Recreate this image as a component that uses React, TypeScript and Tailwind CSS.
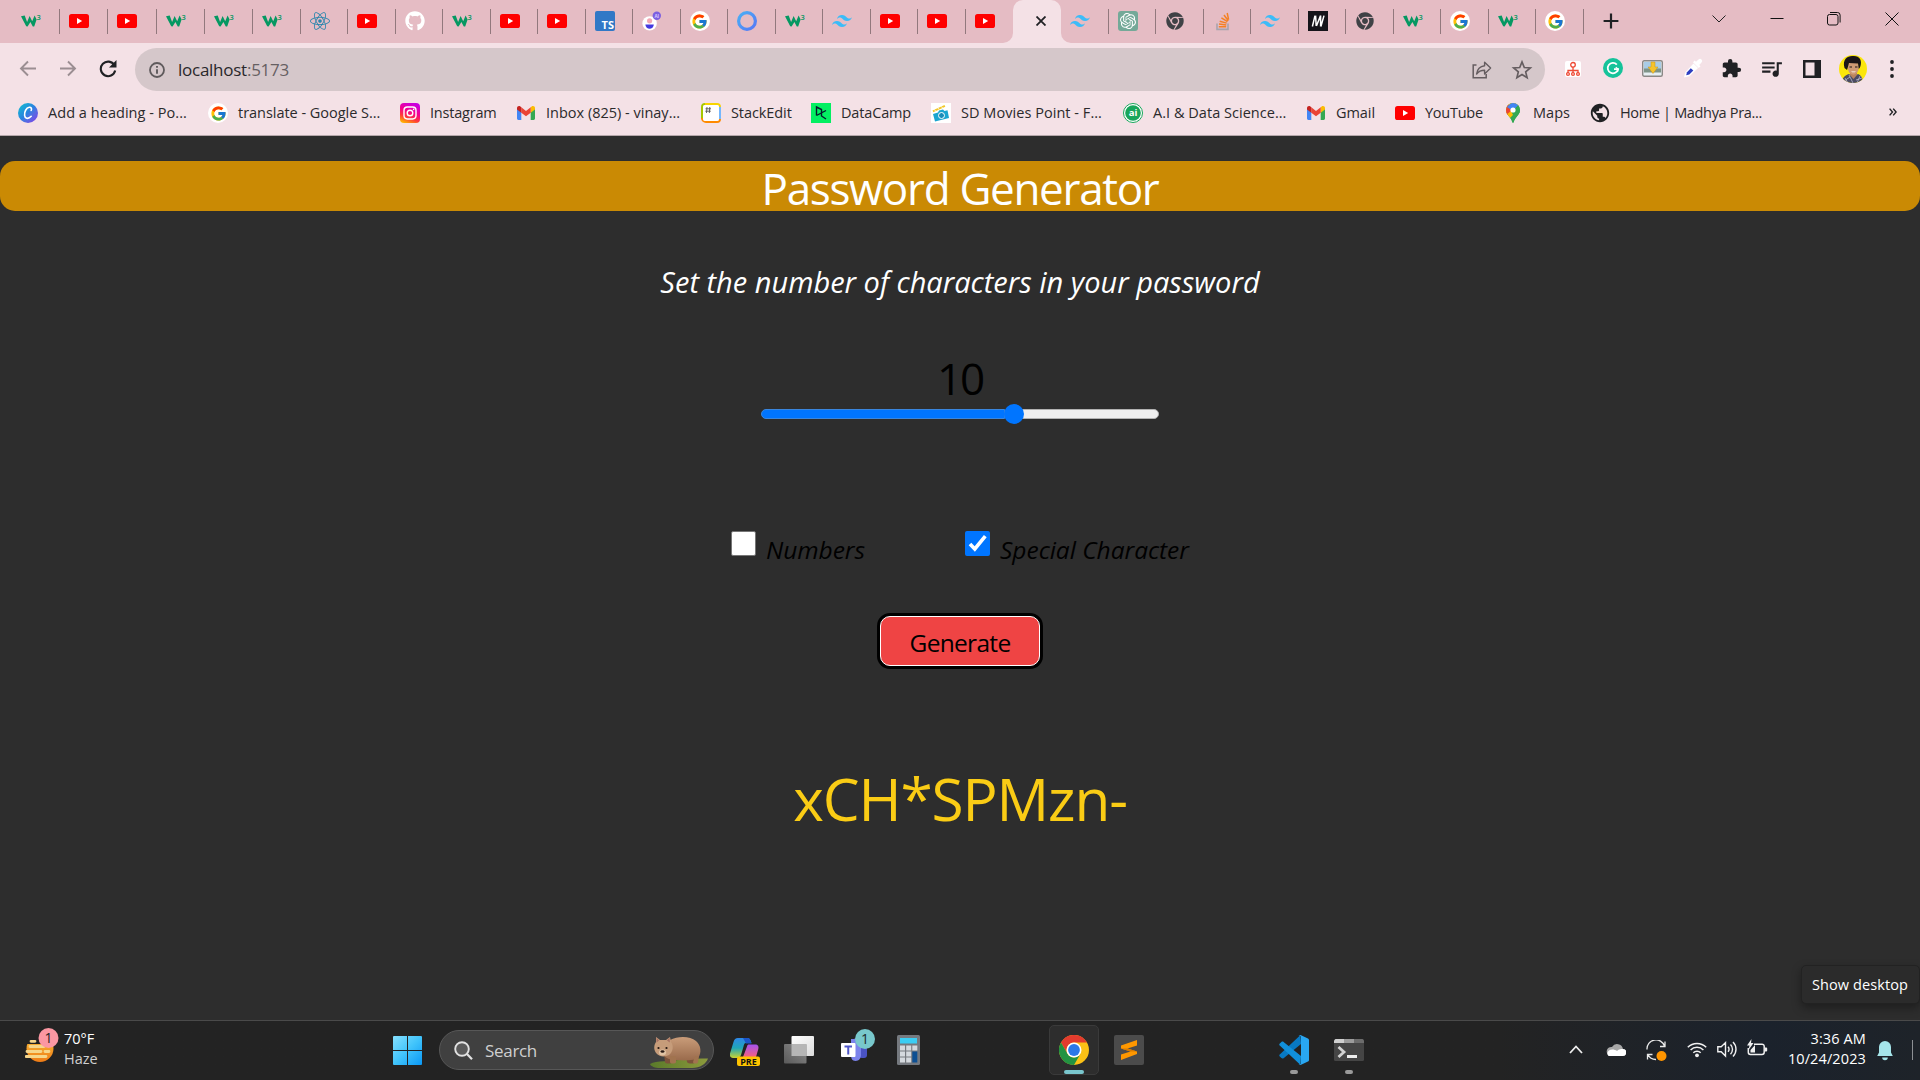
import React, { useState } from "react";
import { FcGoogle } from "react-icons/fc";
import { FaChrome, FaGithub, FaReact } from "react-icons/fa";
import { SiOpenai, SiTailwindcss } from "react-icons/si";
import { MdExtension, MdQueueMusic, MdPublic } from "react-icons/md";

/* ---------- favicons (20 x 20) ---------- */

function W3() {
  return (
    <svg viewBox="0 0 20 20" className="size-5">
      <path d="M0 5.3 3.7 4.6 6.1 11 8.6 5 11.2 10.2 13.6 4.6 15.6 8.4 13.2 15.6 11.8 15.6 9.4 11 6.6 15.6 5.2 15.2Z" fill="#059862" />
      <text x="15.6" y="8.6" fontSize="7.5" fontWeight="600" fontFamily="Open Sans, sans-serif" fill="#059862">3</text>
    </svg>
  );
}

function YouTube() {
  return (
    <svg viewBox="0 0 20 20" className="size-5">
      <rect y="3" width="20" height="14" rx="2.6" fill="#f00" />
      <path d="M8 7v6l5.2-3z" fill="#fff" />
    </svg>
  );
}

function Google() {
  return (
    <span className="flex size-5 items-center justify-center rounded-full bg-white">
      <FcGoogle className="size-[17px]" />
    </span>
  );
}

function GitHub() {
  return <FaGithub className="size-5 text-white" />;
}

function ReactLogo() {
  return <FaReact className="size-5 text-[#2c86ad]" />;
}

function TypeScript() {
  return (
    <span className="flex size-5 items-end justify-end rounded-[2px] bg-[#3178c6] pr-px text-[11px] leading-[13px] font-bold text-white">
      TS
    </span>
  );
}

function AiPerson() {
  return (
    <svg viewBox="0 0 20 20" className="size-5">
      <circle cx="7.6" cy="12.4" r="7.2" fill="#fff" />
      <circle cx="7.6" cy="9.8" r="2.6" fill="#f3a6b4" />
      <path d="M3.4 13.6h8.4a4.2 4.2 0 0 1-8.4 0z" fill="#4338e0" />
      <circle cx="14.8" cy="4.8" r="4.2" fill="#7c5fe0" />
      <text x="14.8" y="6.6" fontSize="4.6" fontWeight="700" textAnchor="middle" fontFamily="Open Sans, sans-serif" fill="#d7c9ff">AI</text>
    </svg>
  );
}

function BlueRing() {
  return (
    <svg viewBox="0 0 20 20" className="size-5">
      <defs>
        <linearGradient id="ring" x1="0" y1="0" x2="1" y2="1">
          <stop offset="0" stopColor="#4ab0f5" />
          <stop offset="1" stopColor="#5577f5" />
        </linearGradient>
      </defs>
      <circle cx="10" cy="10" r="8.4" fill="none" stroke="url(#ring)" strokeWidth="3.2" />
    </svg>
  );
}

function Tailwind() {
  return <SiTailwindcss className="size-5 text-[#3bbcf8]" />;
}

function OpenAi() {
  return (
    <span className="flex size-5 items-center justify-center rounded-[3px] bg-[#74a998]">
      <SiOpenai className="size-4 text-white" />
    </span>
  );
}

function ChromeGrey() {
  return <FaChrome className="size-[18px] text-[#3f4246]" />;
}

function StackOverflow() {
  return (
    <svg viewBox="0 0 20 20" className="size-5">
      <path d="M4 12.4v6h11v-6" fill="none" stroke="#a9a4ad" strokeWidth="1.6" />
      <path d="M5.8 15.8h7.4M6 13.1l7.3.8M6.7 10.2l7 1.9M8.4 6.9l6.1 3.7M11 4l4.3 5.7M14.2 2l1.4 6.6" stroke="#f48024" strokeWidth="1.5" fill="none" />
    </svg>
  );
}

function MLogo() {
  return (
    <svg viewBox="0 0 20 20" className="size-5">
      <rect width="20" height="20" fill="#15141a" />
      <path d="M4.4 15.5 7 4.6M7.6 4.6 8.2 15M8.4 15 12.6 4.6M12.6 4.6v10.9M12.9 15.5 16 4.6" stroke="#fff" strokeWidth="1.5" fill="none" />
    </svg>
  );
}

/* ---------- tab strip ---------- */

const leftTabs = [
  W3, YouTube, YouTube, W3, W3, W3, ReactLogo, YouTube, GitHub, W3, YouTube, YouTube, TypeScript,
  AiPerson, Google, BlueRing, W3, Tailwind, YouTube, YouTube, YouTube,
];
const rightTabs = [Tailwind, OpenAi, ChromeGrey, StackOverflow, Tailwind, MLogo, ChromeGrey, W3, Google, W3, Google];

function Tab({ icon: Icon, divider, wide = false }: { icon: React.ComponentType; divider: boolean; wide?: boolean }) {
  return (
    <div className={`${wide ? "w-[48.4px]" : "w-[47.5px]"} relative flex h-[43px] shrink-0 items-center pb-px pl-[9px]`}>
      <span className="flex size-5 items-center justify-center">
        <Icon />
      </span>
      {divider && <span className="absolute top-[9px] right-0 h-[25px] w-px bg-[#92787d]" />}
    </div>
  );
}

function TabStrip() {
  return (
    <div className="flex h-[43px] bg-[#e5bcc4] pl-[11.500px]">
      {leftTabs.map((icon, i) => (
        <Tab key={i} icon={icon} divider={i < leftTabs.length - 1} wide={i < 5} />
      ))}
      <div className="relative flex h-[43px] w-[48px] shrink-0 items-center justify-end rounded-t-[10px] bg-[#f4e1e6] pr-[15px] pb-px">
        <svg viewBox="0 0 10 10" className="absolute bottom-0 -left-[10px] size-[10px]">
          <path d="M10 0v10H0A10 10 0 0 0 10 0" fill="#f4e1e6" />
        </svg>
        <svg viewBox="0 0 10 10" className="absolute -right-[10px] bottom-0 size-[10px]">
          <path d="M0 0v10h10A10 10 0 0 1 0 0" fill="#f4e1e6" />
        </svg>
        <svg viewBox="0 0 10 10" className="size-[10px]">
          <path d="M.5.5l9 9M9.5.5l-9 9" stroke="#202124" strokeWidth="1.8" />
        </svg>
      </div>
      {rightTabs.map((icon, i) => (
        <Tab key={i} icon={icon} divider />
      ))}
      <svg viewBox="0 0 16 16" className="mt-[13px] ml-[19px] size-4">
        <path d="M8 .6v14.8M.6 8h14.8" stroke="#202124" strokeWidth="2.2" />
      </svg>
      <div className="ml-auto flex shrink-0 pt-3">
        <svg viewBox="0 0 14 14" className="mr-11 size-[14px]">
          <path d="M.5 3.5 7 10l6.500-6.500" stroke="#222" fill="none" />
        </svg>
        <svg viewBox="0 0 14 14" className="mr-[43px] size-[14px]">
          <path d="M.5 6.500h13" stroke="#111" fill="none" />
        </svg>
        <svg viewBox="0 0 14 14" className="mr-[44px] size-[14px]">
          <rect x=".5" y="2.500" width="10.500" height="10.500" rx="2" stroke="#111" fill="none" />
          <path d="M3 .5h7.500a2.600 2.600 0 0 1 2.600 2.600V10.500" stroke="#111" fill="none" />
        </svg>
        <svg viewBox="0 0 14 14" className="mr-[21px] size-[14px]">
          <path d="M.5.5l13 13M13.500.5l-13 13" stroke="#111" fill="none" />
        </svg>
      </div>
    </div>
  );
}

/* ---------- toolbar ---------- */

function Toolbar() {
  return (
    <div className="flex h-[53px] items-start pl-[19px]">
      <svg viewBox="0 0 18 18" className="mt-[17px] size-[18px]">
        <path d="M17 8.500H2M9 1.500l-7 7 7 7" stroke="#9b8e92" strokeWidth="1.900" fill="none" />
      </svg>
      <svg viewBox="0 0 18 18" className="mt-[17px] ml-[22px] size-[18px]">
        <path d="M1 8.500h15M9 1.500l7 7-7 7" stroke="#9b8e92" strokeWidth="1.900" fill="none" />
      </svg>
      <svg viewBox="0 0 18 18" className="mt-[17px] ml-[22px] size-[18px]">
        <path d="M15.400 5.200A7.300 7.300 0 1 0 16.200 10.600" stroke="#202124" strokeWidth="2.100" fill="none" />
        <path d="M17.500 0v7.500H10z" fill="#202124" />
      </svg>

      <div className="mt-[5px] ml-[18px] flex h-[43px] w-[1410px] items-center rounded-full bg-[#d5c7ca] pl-[14px]">
        <svg viewBox="0 0 16 16" className="size-4">
          <circle cx="8" cy="8" r="7" stroke="#5f5a5c" strokeWidth="1.800" fill="none" />
          <path d="M8 7.200v4.600M8 3.900v1.800" stroke="#5f5a5c" strokeWidth="1.900" />
        </svg>
        <span className="ml-[13px] text-[17px] tracking-[-0.015em] text-[#665f62]">
          <span className="text-[#29282a]">localhost</span>:5173
        </span>
        <svg viewBox="0 0 20 18" className="ml-auto h-[18px] w-5">
          <path d="M4.500 4H1.200v12.800h13V13" stroke="#655d60" strokeWidth="1.500" fill="none" />
          <path d="M12.600 1.200v3.600C7.600 5.500 5.200 8.500 4.600 13c2-2.700 4.400-3.700 8-3.700V13l6-5.900z" stroke="#655d60" strokeWidth="1.400" fill="none" strokeLinejoin="round" />
        </svg>
        <svg viewBox="0 0 24 24" className="mr-[12px] ml-[19px] size-[22px]">
          <path d="m12 3.200 2.500 6.100 6.600.5-5.100 4.200 1.600 6.400L12 17l-5.600 3.400L8 14 2.900 9.800l6.600-.5z" stroke="#655d60" strokeWidth="1.800" fill="none" />
        </svg>
      </div>

      <svg viewBox="0 0 16 16" className="mt-[18px] ml-5 size-4">
        <rect width="16" height="16" rx="2" fill="#fff" />
        <g stroke="#ee4a35" fill="none" strokeWidth="1.300">
          <circle cx="8" cy="3.800" r="2.300" />
          <path d="M8 6v6M3 12V9.500h10V12" />
          <circle cx="3" cy="13" r="1.400" />
          <circle cx="8" cy="13" r="1.400" />
          <circle cx="13" cy="13" r="1.400" />
        </g>
      </svg>
      <svg viewBox="0 0 20 20" className="mt-[15px] ml-[22px] size-5">
        <circle cx="10" cy="10" r="10" fill="#15c39a" />
        <path d="M13.800 6.600A5.200 5.200 0 1 0 15 11.200h-4" stroke="#fff" strokeWidth="1.800" fill="none" />
        <path d="m12.800 9.300 2.300 1.900-.6 2.600" stroke="#fff" strokeWidth="1.300" fill="none" />
      </svg>
      <svg viewBox="0 0 21 17" className="mt-[17px] ml-[19px] h-[17px] w-[21px]">
        <rect x=".7" y=".7" width="19.600" height="15.600" rx="1.500" fill="#e6eef2" stroke="#8b8886" strokeWidth="1.400" />
        <rect x="2" y="2" width="17" height="7" fill="#a9cce6" />
        <rect x="2" y="8.500" width="17" height="4" fill="#7f9488" />
        <path d="M9 2h4v5h3l-5 6.500L6 7h3z" fill="#f6c32c" stroke="#c89416" strokeWidth=".5" />
      </svg>
      <svg viewBox="0 0 20 20" className="mt-[15px] ml-5 size-5">
        <path d="m2 18.500 1-4 7.500-8 3.500 3.500L6 17.500z" fill="#fff" stroke="#fff" strokeWidth="1.500" />
        <path d="m3.200 17.200.8-3 3.800-4 2.500 2.400-4 4z" fill="#2c3fc0" />
        <path d="m10 4.200 5.800 5.800 1.700-1.700-1.300-1.300 2.300-2.500a2 2 0 0 0-3-3l-2.500 2.300-1.300-1.300z" fill="#fff" />
      </svg>
      <MdExtension className="mt-[15px] ml-[18px] size-[21px] text-[#202124]" />
      <MdQueueMusic className="mt-[13px] ml-[17px] size-[25px] text-[#202124]" />
      <svg viewBox="0 0 18 18" className="mt-[17px] ml-[19px] size-[18px]">
        <path d="M0 0h18v18H0zM2.500 2.500v13h9v-13z" fill="#202124" fillRule="evenodd" />
      </svg>
      <svg viewBox="0 0 28 28" className="mt-[12px] ml-[18px] size-7">
        <defs>
          <clipPath id="avatar"><circle cx="14" cy="14" r="14" /></clipPath>
        </defs>
        <g clipPath="url(#avatar)">
          <rect width="28" height="28" fill="#fbe60a" />
          <path d="M3 28c0-5 3-8 7-9l4 3 5-3c3 1 5 4 5 9z" fill="#4b4b63" />
          <path d="M6 23l3 5M10 20l4 8M21 21l-3 7M5 26l6-4M17 25l6-2" stroke="#b9b7c8" strokeWidth=".8" />
          <path d="M11 16h7v4l-3.500 4L11 20z" fill="#b9835e" />
          <ellipse cx="14.300" cy="12.500" rx="5.600" ry="7.200" fill="#cf9a74" />
          <path d="M5.500 13C3 4 9 .5 14 1c6-.5 10 4 7 11.500L19.800 14 19 8.500 10 8l-1.500 5.500L8 15z" fill="#1b1517" />
          <path d="M10.500 12h2.500M16 12h2.500" stroke="#1b1517" />
          <path d="M12 16.400c1.500 1.200 3.500 1.200 5 0z" fill="#fff" />
        </g>
      </svg>
      <svg viewBox="0 0 4 18" className="mt-[17px] ml-[23px] h-[18px] w-1">
        <circle cx="2" cy="2" r="1.900" fill="#202124" />
        <circle cx="2" cy="9" r="1.900" fill="#202124" />
        <circle cx="2" cy="16" r="1.900" fill="#202124" />
      </svg>
    </div>
  );
}

/* ---------- bookmarks ---------- */

function Canva() {
  return (
    <span className="flex size-5 items-center justify-center rounded-full bg-linear-to-br from-[#11c3cc] via-[#2a7fe0] to-[#7d2ae8]">
      <svg viewBox="0 0 20 20" className="size-5">
        <path d="M13.200 7.500c1-2-.3-3.600-2-3.200-3 .6-5 4.600-4.600 8 .3 3 3.200 4.600 6.600 1" stroke="#fff" strokeWidth="1.600" fill="none" strokeLinecap="round" />
      </svg>
    </span>
  );
}

function Instagram() {
  return (
    <svg viewBox="0 0 20 20" className="size-5">
      <defs>
        <linearGradient id="insta" x1=".2" y1="1" x2=".6" y2="0">
          <stop offset="0" stopColor="#ffb800" />
          <stop offset=".3" stopColor="#ff3a3a" />
          <stop offset=".6" stopColor="#f5008e" />
          <stop offset="1" stopColor="#c800e0" />
        </linearGradient>
      </defs>
      <rect width="20" height="20" rx="4" fill="url(#insta)" />
      <rect x="4" y="4" width="12" height="12" rx="3.400" stroke="#fff" strokeWidth="1.400" fill="none" />
      <circle cx="10" cy="10" r="2.800" stroke="#fff" strokeWidth="1.400" fill="none" />
      <circle cx="13.600" cy="6.400" r=".8" fill="#fff" />
    </svg>
  );
}

function Gmail() {
  return (
    <svg viewBox="0 0 20 20" className="size-5">
      <path d="M1 5v10.500c0 .8.600 1.400 1.400 1.400h2.900V9z" fill="#4285f4" />
      <path d="M19 5v10.500c0 .8-.6 1.400-1.400 1.400h-2.900V9z" fill="#34a853" />
      <path d="M14.700 4.500V9.700L19 6.500V5c0-1.800-2-2.600-3.400-1.500z" fill="#fbbc04" />
      <path d="M5.300 9.700V4.300L10 7.900l4.700-3.600v5.400L10 13.200z" fill="#ea4335" />
      <path d="M1 5v1.500l4.300 3.200V4.300l-.9-.8C3 2.400 1 3.200 1 5z" fill="#c5221f" />
    </svg>
  );
}

function StackEdit() {
  return (
    <svg viewBox="0 0 20 20" className="size-5">
      <path d="M4 1h12a3 3 0 0 1 3 3" stroke="#f7d400" strokeWidth="2" fill="none" />
      <path d="M4 1a3 3 0 0 0-3 3v12" stroke="#a5c700" strokeWidth="2" fill="none" />
      <path d="M1 15a4 4 0 0 0 4 4h11a3 3 0 0 0 3-3" stroke="#ff8a00" strokeWidth="2" fill="none" />
      <path d="M19 4v12" stroke="#75b7fd" strokeWidth="2" />
      <rect x="2" y="2" width="16" height="16" rx="2" fill="#fff" />
      <path d="M6 4 5.500 10M8.800 4l-.5 6M4.500 5.800H10M4.300 8.200h5.500" stroke="#555" strokeWidth=".9" />
    </svg>
  );
}

function DataCamp() {
  return (
    <svg viewBox="0 0 20 20" className="size-5">
      <rect width="20" height="20" fill="#03ef62" />
      <path d="M5.500 12.500V4l5 2.500v6.500l4.500 3M5.500 12.500 15 7.500" stroke="#05192d" strokeWidth="1.400" fill="none" />
    </svg>
  );
}

function Movies() {
  return (
    <svg viewBox="0 0 20 20" className="size-5">
      <rect width="20" height="20" fill="#fff" />
      <path d="m1.500 7.500 12-5.500.8 1.800-12 5.500z" fill="#f2c72b" />
      <path d="m3.500 6.500 1 1.500M7 5l1 1.500M10.500 3.500l1 1.500" stroke="#fff" strokeWidth=".8" />
      <path d="m2 11 5-1.500 1-2 4-1 1.500 1.500 3-.8 1.500 7.800L4 18.500z" fill="#1aa5d0" />
      <circle cx="10.500" cy="12.500" r="3" fill="#1b8cb8" stroke="#fff" strokeWidth="1" />
    </svg>
  );
}

function AiBadge() {
  return (
    <svg viewBox="0 0 20 20" className="size-5">
      <circle cx="10" cy="10" r="9.500" fill="#fff" stroke="#17a65b" />
      <circle cx="10" cy="10" r="7.800" fill="#17a65b" />
      <text x="10" y="13.300" textAnchor="middle" fontSize="9.500" fontWeight="700" fontFamily="Open Sans, sans-serif" fill="#fff">ai</text>
    </svg>
  );
}

function MapsPin() {
  return (
    <svg viewBox="0 0 20 20" className="size-5">
      <defs>
        <clipPath id="pin"><path d="M10 0a7 7 0 0 1 7 7c0 3.200-1.800 4.800-3.600 7.200C12 16 11.200 17.600 10.800 19.200c-.3 1-1.300 1-1.600 0C8.800 17.600 8 16 6.600 14.200 4.800 11.800 3 10.200 3 7a7 7 0 0 1 7-7z" /></clipPath>
      </defs>
      <g clipPath="url(#pin)">
        <rect width="20" height="20" fill="#34a853" />
        <path d="M0 15 18 0H0z" fill="#fbbc04" />
        <path d="M0 9.500 5 1l5 6-6 7z" fill="#ea4335" />
        <path d="M4 4 9-1l9 1-8 8z" fill="#4285f4" />
        <path d="M10 8 16 1l2 7-8 11-3-4z" fill="#34a853" />
        <path d="m3 12 5-4 2 4-4 4z" fill="#fbbc04" />
      </g>
      <circle cx="10" cy="7" r="2.600" fill="#fff" />
    </svg>
  );
}

function Globe() {
  return <MdPublic className="size-[22px] shrink-0 text-[#202124]" />;
}

const bookmarks: { icon: React.ComponentType; label: string; box: string; track: string }[] = [
  { icon: Canva, label: "Add a heading - Po...", box: "w-[190px]", track: "tracking-[0.003em]" },
  { icon: Google, label: "translate - Google S...", box: "w-[192px]", track: "tracking-[-0.002em]" },
  { icon: Instagram, label: "Instagram", box: "w-[116px]", track: "tracking-[-0.014em]" },
  { icon: Gmail, label: "Inbox (825) - vinay...", box: "w-[185px]", track: "tracking-normal" },
  { icon: StackEdit, label: "StackEdit", box: "w-[110px]", track: "tracking-[-0.006em]" },
  { icon: DataCamp, label: "DataCamp", box: "w-[120px]", track: "tracking-[-0.011em]" },
  { icon: Movies, label: "SD Movies Point - F...", box: "w-[192px]", track: "tracking-[0.003em]" },
  { icon: AiBadge, label: "A.I & Data Science...", box: "w-[183px]", track: "tracking-[0.002em]" },
  { icon: Gmail, label: "Gmail", box: "w-[89px]", track: "tracking-[-0.005em]" },
  { icon: YouTube, label: "YouTube", box: "w-[108px]", track: "tracking-[-0.018em]" },
  { icon: MapsPin, label: "Maps", box: "w-[87px]", track: "tracking-[0.002em]" },
  { icon: Globe, label: "Home | Madhya Pra...", box: "w-[190px]", track: "tracking-[-0.023em]" },
];

function BookmarkBar() {
  return (
    <div className="flex h-[40px] items-start border-b border-[#b5a7aa] pt-[7px] pl-[18px]">
      {bookmarks.map(({ icon: Icon, label, box, track }, i) => (
        <div key={i} className={`${box} ${track} flex h-5 shrink-0 items-center gap-[10px] text-[14.5px] whitespace-nowrap text-[#2b2a2c]`}>
          <span className="flex size-5 shrink-0 items-center justify-center">
            <Icon />
          </span>
          <span className="leading-5">{label}</span>
        </div>
      ))}
      <svg viewBox="0 0 8 8" className="mt-[5px] mr-[23px] ml-auto size-2">
        <path d="m.6.6 2.900 3.400L.6 7.400M4.200.6l2.900 3.400-2.900 3.400" stroke="#202124" strokeWidth="1.400" fill="none" />
      </svg>
    </div>
  );
}

/* ---------- page ---------- */

function Check({ checked, onToggle }: { checked: boolean; onToggle: () => void }) {
  return (
    <button
      role="checkbox"
      aria-checked={checked}
      onClick={onToggle}
      className={
        checked
          ? "flex size-[25px] items-center justify-center rounded-[2px] bg-[#0075ff]"
          : "size-[25px] rounded-[2px] border border-[#767676] bg-white"
      }
    >
      {checked && (
        <svg viewBox="0 0 25 25" className="size-[25px]">
          <path d="m5 13 4.800 5L20.300 5.200" stroke="#fff" strokeWidth="3.600" fill="none" />
        </svg>
      )}
    </button>
  );
}

function Page() {
  const [numbers, setNumbers] = useState(false);
  const [special, setSpecial] = useState(true);
  return (
    <main className="relative flex h-[884px] flex-col items-center bg-[#2d2d2d] pt-[25px]">
      <h1 className="flex h-[50px] w-full items-center justify-center rounded-[15px] bg-[#ca8a04] pt-[4px] text-[44px] leading-[50px] tracking-[-0.03em] text-white">
        Password Generator
      </h1>
      <p className="mt-[51px] text-[29px] leading-[40px] text-white italic">Set the number of characters in your password</p>
      <div className="mt-[51px] text-[44px] leading-[50px] tracking-[-0.049em] text-black">10</div>
      <div className="mt-px flex h-5 w-[398px] items-center">
        <div className="h-[10px] w-[244px] rounded-l-full border border-[#3a86dd] bg-[#0075ff]" />
        <div className="z-10 -mx-[1px] size-5 rounded-full bg-[#0075ff]" />
        <div className="-ml-[9px] h-[10px] flex-1 rounded-r-full border border-[#b2b2b2] bg-[#efefef]" />
      </div>

      <div className="mt-[107px] flex h-[40px] w-full pl-[731px] text-[24.5px] leading-[40px] text-black italic">
        <Check checked={numbers} onToggle={() => setNumbers(!numbers)} />
        <span className="mt-[-1px] ml-[10px] w-[199px] tracking-[-0.002em]">Numbers</span>
        <Check checked={special} onToggle={() => setSpecial(!special)} />
        <span className="mt-[-1px] ml-[10px] tracking-[-0.001em]">Special Character</span>
      </div>

      <button className="mt-[45px] flex h-[50px] w-[160px] items-center justify-center rounded-[10px] border border-white bg-[#ef4444] pt-[5px] text-[24.5px] tracking-[-0.028em] text-black ring-3 ring-black">
        Generate
      </button>

      <div className="mt-[92px] text-[58.5px] leading-[80px] tracking-[-0.019em] text-[#facc15]">xCH*SPMzn-</div>

      <div className="absolute right-0 bottom-4 flex h-[39px] w-[119px] items-center rounded-[5px] border border-[#222] bg-[#2b2b2b] pl-[10px] text-[14.5px] tracking-[0.006em] text-white shadow-[0_4px_10px_rgba(0,0,0,0.35)]">
        Show desktop
      </div>
    </main>
  );
}

/* ---------- taskbar ---------- */

function Weather() {
  return (
    <div className="flex w-[368px] pl-[25px]">
      <svg viewBox="0 0 34 36" className="h-9 w-[34px]">
        <defs>
          <linearGradient id="sun" x1="0" y1="0" x2="0" y2="1">
            <stop offset="0" stopColor="#f9c13a" />
            <stop offset="1" stopColor="#ee7b16" />
          </linearGradient>
        </defs>
        <circle cx="15" cy="21.500" r="13.500" fill="url(#sun)" />
        <path d="M0 0h22v17H0z" fill="#232323" />
        <path d="M6 14.300h4M5 19.500h14M2 24.500h14M20 24.500h4M1 29.500h20" stroke="#f6d68a" strokeWidth="2.800" strokeLinecap="round" />
        <circle cx="23.500" cy="11" r="10" fill="#fb97a2" />
        <text x="23.500" y="16" textAnchor="middle" fontSize="14" fontFamily="Open Sans, sans-serif" fill="#222">1</text>
      </svg>
      <div className="mt-0.5 ml-[5px] text-[14.5px] leading-5">
        <div className="text-white">70°F</div>
        <div className="text-[#d0d0d0]">Haze</div>
      </div>
    </div>
  );
}

function Wombat() {
  return (
    <svg viewBox="0 0 58 32" className="mt-[3px] ml-auto h-8 w-[58px]">
      <defs>
        <linearGradient id="fur" x1="0" y1="0" x2="0" y2="1">
          <stop offset="0" stopColor="#c99c79" />
          <stop offset="1" stopColor="#9a6b4c" />
        </linearGradient>
        <linearGradient id="grass" x1="0" y1="0" x2="1" y2="0">
          <stop offset="0" stopColor="#5a7a2a" />
          <stop offset="1" stopColor="#8c9a3c" />
        </linearGradient>
      </defs>
      <path d="M0 28C4 26 10 25 18 25.500 30 23 46 22 58 22.500 56 28 50 32 42 32H10c-5 0-9-1.500-10-4z" fill="url(#grass)" />
      <path d="M14 18h8v8c0 2-7 2-7 0zM36 20h9v6c0 2-7 2-8 0z" fill="#7c533a" />
      <path d="M20 4C28 0 40 0 46 5c5 4 6 12 2 17-2 2-12 3-22 2-8 0-13-3-13-9C13 9 16 5 20 4z" fill="url(#fur)" />
      <path d="M20 20h6v6c0 2-6 2-6 0zM45 20h4l-1 6c0 2-5 2-5 0z" fill="#a1734f" />
      <path d="M6 1l4 3h6l4-3 1 5c3 4 2 10-2 13-4 2-9 2-12-1C3 14 4 9 6 6z" fill="#c69c7a" />
      <path d="M6.500 1.500 9 4.500l-2.500 2zM19.500 1.500 17 4.500l2.800 2z" fill="#a56e60" />
      <circle cx="8.500" cy="12" r="1.100" fill="#23150e" />
      <circle cx="16.500" cy="12" r="1.100" fill="#23150e" />
      <ellipse cx="12.500" cy="16.500" rx="3.600" ry="3" fill="#e0c3a4" />
      <ellipse cx="12.500" cy="15.500" rx="2" ry="1.300" fill="#2a1a14" />
    </svg>
  );
}

function Taskbar() {
  return (
    <footer className="flex h-[60px] border-t border-[#4a4a4a] bg-[#232323] bg-linear-to-r from-[#232323] from-[78%] via-[#1b222c] via-[92%] to-[#1e2329]">
      <div className="flex h-[59px] w-full items-start">
        <div className="mt-[6px]">
          <Weather />
        </div>
        <svg viewBox="0 0 29 29" className="mt-[15px] ml-[25px] size-[29px]">
          <defs>
            <linearGradient id="win" x1="0" y1="0" x2="1" y2="1">
              <stop offset="0" stopColor="#86e0ff" />
              <stop offset=".5" stopColor="#41c4fb" />
              <stop offset="1" stopColor="#0a98f6" />
            </linearGradient>
          </defs>
          <path d="M1 0h13v14H0V1a1 1 0 0 1 1-1zM15 0h13a1 1 0 0 1 1 1v13H15zM0 15h14v14H1a1 1 0 0 1-1-1zM15 15h14v13a1 1 0 0 1-1 1H15z" fill="url(#win)" />
        </svg>
        <div className="mt-[9px] ml-[17px] flex h-10 w-[275px] items-center rounded-full border border-[#575757] bg-[#404040] pr-[5px] pl-[14px]">
          <svg viewBox="0 0 19 19" className="size-[19px]">
            <circle cx="8" cy="8" r="6.800" stroke="#e2e2e2" strokeWidth="1.900" fill="#5a5a5a" />
            <path d="m13 13 5 5.200" stroke="#e2e2e2" strokeWidth="2.200" />
          </svg>
          <span className="mt-0.5 ml-3 text-[17px] leading-5 tracking-[-0.018em] text-[#cfcfcf]">Search</span>
          <Wombat />
        </div>

        <svg viewBox="0 0 30 28" className="mt-[17px] ml-[16px] h-7 w-[30px]">
          <defs>
            <linearGradient id="cop1" x1="0" y1="0" x2="0" y2="1">
              <stop offset="0" stopColor="#2e87e8" />
              <stop offset=".5" stopColor="#1fa6b8" />
              <stop offset="1" stopColor="#c8d432" />
            </linearGradient>
            <linearGradient id="cop2" x1="0" y1="0" x2="0" y2="1">
              <stop offset="0" stopColor="#a452f0" />
              <stop offset="1" stopColor="#f4607d" />
            </linearGradient>
          </defs>
          <path d="M8 0h9c3 0 3.500 2 4.500 5H16c-2 0-2 2-2.500 3.500L11 17c-.7 2-2 3-4 3H3c-2.500 0-3.500-2-3-4.500L3.500 4C4.300 1.500 5.500 0 8 0z" fill="url(#cop1)" />
          <path d="M13 0h4c3 0 3.500 2 4.500 5.500H16z" fill="#1b55c9" />
          <path d="M19 6.500h6c3 0 4 2 3.300 4.500L26 19H13l4-10.500c.4-1.400.8-2 2-2z" fill="url(#cop2)" />
          <rect x="7" y="18.500" width="23" height="9.500" rx="2" fill="#ffc400" />
          <text x="18.500" y="26.500" textAnchor="middle" fontSize="9" fontWeight="700" fontFamily="Open Sans, sans-serif" fill="#111">PRE</text>
        </svg>
        <svg viewBox="0 0 30 28" className="mt-[15px] ml-6 h-7 w-[30px]">
          <defs>
            <linearGradient id="tv1" x1="0" y1="0" x2="1" y2="1">
              <stop offset="0" stopColor="#fff" />
              <stop offset="1" stopColor="#dcdcdc" />
            </linearGradient>
            <linearGradient id="tv2" x1="0" y1="1" x2="1" y2="0">
              <stop offset="0" stopColor="#5a5a5a" />
              <stop offset="1" stopColor="#8c8c8c" />
            </linearGradient>
          </defs>
          <rect x="7.500" y="0" width="22.500" height="20" rx="1" fill="url(#tv1)" />
          <rect x="0" y="8" width="22.500" height="19.500" rx="1" fill="url(#tv2)" />
          <path d="M7.500 8h15v12h-15z" fill="#b6b6b6" />
        </svg>
        <svg viewBox="0 0 35 34" className="mt-[8px] ml-[27px] h-[34px] w-[35px]">
          <rect x="18" y="14" width="8" height="15" rx="3" fill="#4a53c4" />
          <path d="M10 10h10v16c0 3-2 6-5.500 6S10 29 10 26z" fill="#7b83eb" />
          <circle cx="15" cy="14" r="4.500" fill="#7b83eb" />
          <rect x="0" y="14" width="14.500" height="14" rx="1" fill="#fff" />
          <path d="M3.500 17.500h7.500M7.250 17.500v8" stroke="#4f56c8" strokeWidth="2" />
          <circle cx="24" cy="10" r="10" fill="#78c8cc" />
          <text x="24" y="15" textAnchor="middle" fontSize="14" fontFamily="Open Sans, sans-serif" fill="#1d2b2c">1</text>
        </svg>
        <svg viewBox="0 0 23 30" className="mt-[14px] ml-[21px] h-[30px] w-[23px]">
          <rect width="23" height="30" rx="1.500" fill="#75797f" />
          <rect x="3" y="3" width="17" height="5.500" fill="#3bcdf3" />
          <g fill="#d5d9de">
            <path d="M3 10.500h5v5H3zM9.200 10.500h5v5h-5zM15.300 10.500h5v5h-5zM3 16.500h5v5H3zM9.200 16.500h5v5h-5zM3 22.500h5v5H3zM9.200 22.500h5v5h-5z" />
          </g>
          <path d="M15.300 16.500h5v11h-5z" fill="#0d4f92" />
        </svg>

        <div className="mt-1 ml-[129px] flex h-[50px] w-[50px] flex-col items-center rounded-[5px] border border-[#3a3a3a] bg-[#2d2d2d] pt-[9px]">
          <svg viewBox="0 0 30 30" className="size-[30px]">
            <circle cx="15" cy="15" r="15" fill="#fbc116" />
            <path d="M15 7.500h13a15 15 0 0 0-26 0l6.500 11.200A7.500 7.500 0 0 1 15 7.500z" fill="#e33b2e" />
            <path d="M2 7.500A15 15 0 0 0 15 30l6.500-11.300A7.500 7.500 0 0 1 8.500 18.700z" fill="#229342" />
            <circle cx="15" cy="15" r="7.500" fill="#fff" />
            <circle cx="15" cy="15" r="5.900" fill="#2b78e8" />
          </svg>
          <span className="mt-[5px] h-1 w-5 rounded-full bg-[#79c6cd]" />
        </div>
        <svg viewBox="0 0 30 30" className="mt-[14px] ml-[15px] size-[30px]">
          <rect width="30" height="30" rx="2" fill="#4b4b4b" />
          <path d="M7 10.500 23 5v5.500l-9.500 3 9.500 3V19L7 25v-5.500l9.500-3-9.500-3z" fill="#ff9800" />
          <path d="m13.500 13.500 9.500 3-6.500 0-9.500-3z" fill="#d97a00" />
        </svg>

        <div className="mt-[14px] ml-[135px] flex w-[30px] flex-col items-center">
          <svg viewBox="0 0 30 30" className="size-[30px]">
            <path d="M21.500 0 1 19.200c-1 .8-.9 1.700-.2 2.400l1.600 1.500c.7.600 1.500.6 2.200.1L22 9z" fill="#0879c3" />
            <path d="M21.500 30 1 10.800C0 10 .1 9.100.8 8.400L2.400 7c.7-.6 1.500-.6 2.200-.1L22 21z" fill="#1190db" />
            <path d="M21.500 30c-.9.200-1.600-.3-2-.8.9.8 2.500.3 2.500-1.200V2c0-1.500-1.600-2-2.500-1.200.4-.5 1.100-1 2-.8L29 3.400c.7.300 1 .9 1 1.600v20c0 .7-.3 1.300-1 1.600z" fill="#29a7f2" />
          </svg>
          <span className="mt-[5px] h-1 w-2 rounded-full bg-[#9a9a9a]" />
        </div>
        <div className="mt-[18px] ml-[25px] flex w-[30px] flex-col items-center">
          <svg viewBox="0 0 30 22" className="h-[22px] w-[30px]">
            <rect width="30" height="22" rx="1.500" fill="#454545" />
            <path d="M1.500 0H10v4H0V1.500z" fill="#cfcfcf" />
            <path d="M10 0h10v4H10z" fill="#9c9c9c" />
            <path d="M20 0h8.500L30 1.500V4H20z" fill="#6c6c6c" />
            <path d="m4.500 8 5.500 5-5.500 5" stroke="#d2d2d2" strokeWidth="2.800" fill="none" />
            <path d="M13 17.500h10" stroke="#eee" strokeWidth="3" />
          </svg>
          <span className="mt-[9px] h-1 w-2 rounded-full bg-[#9a9a9a]" />
        </div>

        <div className="ml-auto flex items-start pt-[18px]">
          <svg viewBox="0 0 14 20" className="h-5 w-[14px]">
            <path d="m1 14 6-6.500L13 14" stroke="#eee" strokeWidth="1.800" fill="none" />
          </svg>
          <svg viewBox="0 0 20 20" className="ml-[23px] size-5">
            <path d="M4.500 17h12a3.500 3.500 0 0 0 .5-7A6 6 0 0 0 6 8a4.500 4.500 0 0 0-1.500 9z" fill="#a8a8a8" />
            <path d="M3.500 17h13a3.500 3.500 0 0 0 .5-7c-2 0-4 0-6 2-2-1.500-6-2-8-.5-2.800 2-1.500 5.500.5 5.500z" fill="#fff" />
          </svg>
          <svg viewBox="0 0 21 21" className="mt-px ml-5 size-[21px]">
            <path d="M1 9.500A9 9 0 0 1 18.500 6M19 1.500V6.500h-5M10 19.500A9 9 0 0 1 1.800 14.500M1.500 19.500v-5h5" stroke="#e8e8e8" strokeWidth="1.300" fill="none" />
            <circle cx="15.500" cy="16" r="5" fill="#ff9500" />
          </svg>
          <svg viewBox="0 0 20 20" className="ml-[20px] size-5">
            <path d="M.8 8.200a13 13 0 0 1 18.400 0M3.600 11a9 9 0 0 1 12.800 0M6.300 13.700a5.200 5.200 0 0 1 7.400 0" stroke="#f0f0f0" strokeWidth="1.500" fill="none" />
            <circle cx="10" cy="16.300" r="1.900" fill="#f0f0f0" />
          </svg>
          <svg viewBox="0 0 20 20" className="ml-[10px] size-5">
            <path d="M.8 7.800v5h3.400l4.300 4.200V3.600L4.200 7.800zM11 7.800a3.500 3.500 0 0 1 0 5M13.500 5.400a7 7 0 0 1 0 9.800M16 3a10.400 10.400 0 0 1 0 14.600" stroke="#f0f0f0" strokeWidth="1.400" fill="none" />
          </svg>
          <svg viewBox="0 0 21 20" className="ml-[10px] h-5 w-[21px]">
            <path d="M7 5.200h8a2.200 2.200 0 0 1 2.200 2.200v5.800a2.200 2.200 0 0 1-2.200 2.200H3.500a2.200 2.200 0 0 1-2.200-2.200V9" stroke="#f0f0f0" strokeWidth="1.500" fill="none" />
            <path d="M18 8.500h1.200a1 1 0 0 1 1 1v2a1 1 0 0 1-1 1H18zM3.500 13.500V11l4.500-5v7.500zM4.500 0 0 6.500h2.500L1.500 11 6.500 4H4z" fill="#f0f0f0" />
          </svg>
          <div className="-mt-[10px] ml-[20px] text-right text-[14.5px] leading-5 tracking-[0.008em] text-white">
            <div>3:36 AM</div>
            <div>10/24/2023</div>
          </div>
          <svg viewBox="0 0 16 20" className="mt-[2px] ml-[11px] h-5 w-4">
            <path d="M8 0a6 6 0 0 1 6 6v5.500l1.800 3.500H.2L2 11.500V6a6 6 0 0 1 6-6zM5.200 16.500h5.600a2.800 2.800 0 0 1-5.600 0z" fill="#a5e5ea" />
          </svg>
          <span className="mt-px mr-[7px] ml-[19px] h-5 w-px bg-[#8d9094]" />
        </div>
      </div>
    </footer>
  );
}

export default function App() {
  return (
    <div className="flex h-[1080px] w-[1920px] flex-col overflow-hidden bg-[#f4e1e6] font-['Open_Sans',sans-serif]">
      <TabStrip />
      <Toolbar />
      <BookmarkBar />
      <Page />
      <Taskbar />
    </div>
  );
}
